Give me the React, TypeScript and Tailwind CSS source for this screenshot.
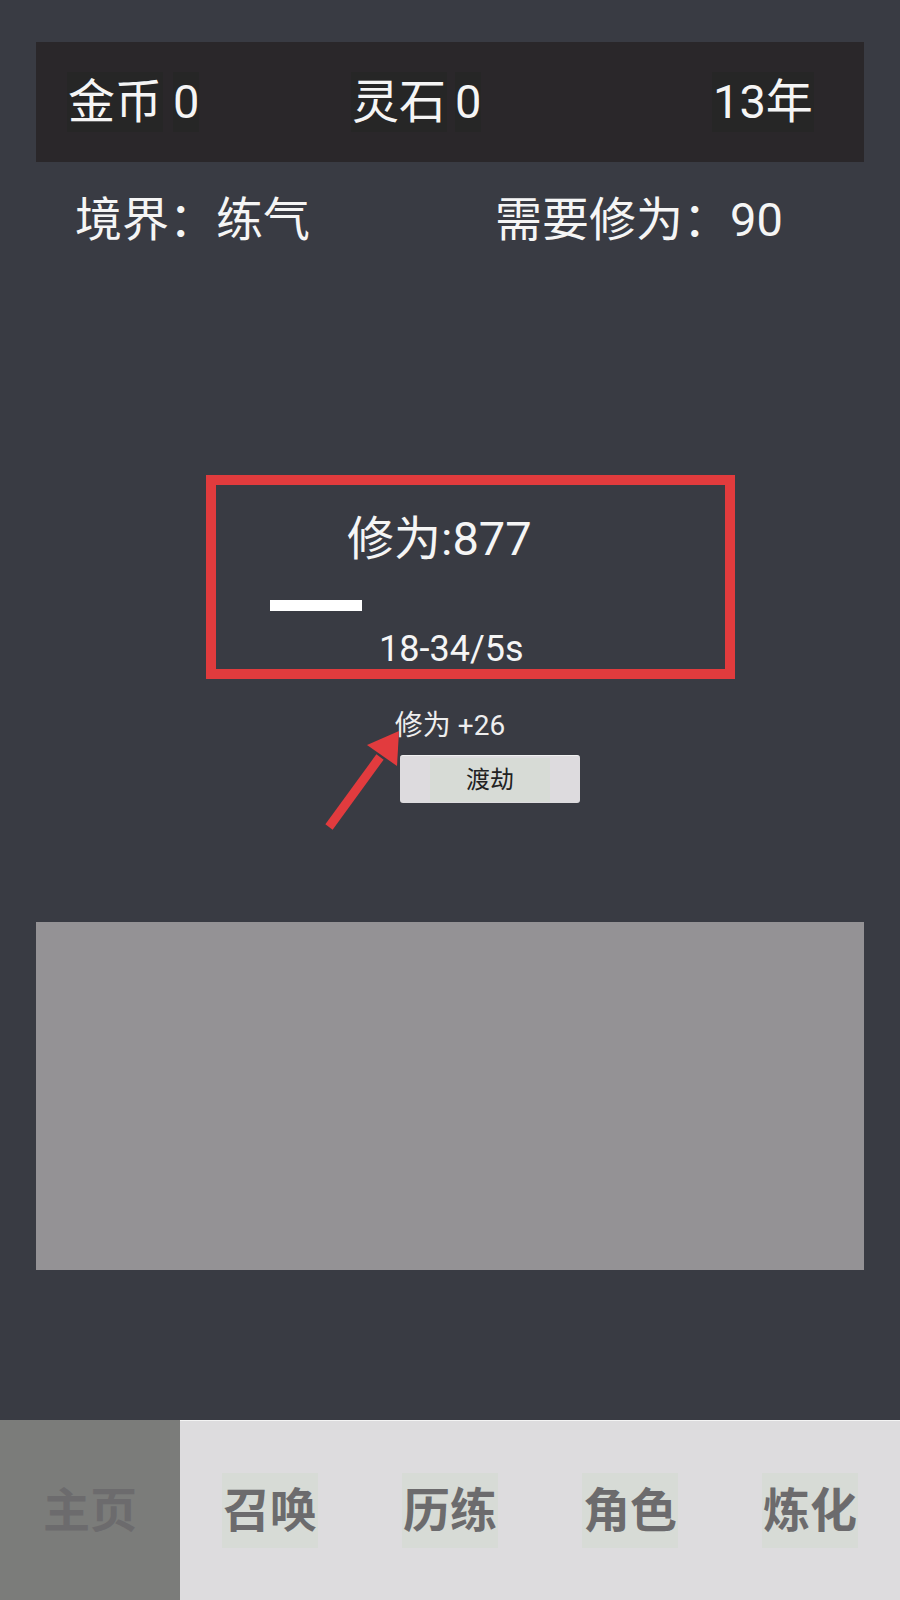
import React from "react";

const F = { fontFamily: "Roboto, 'Noto Sans CJK SC', sans-serif" };

function Tab({ label, active }: { label: string; active?: boolean }) {
  return (
    <div
      className={
        active
          ? "w-[180px] h-[180px] bg-[#7b7c7a] flex items-center justify-center"
          : "w-[180px] h-[180px] bg-[#dddcde] border-t border-[#f4f4f4] flex items-center justify-center"
      }
    >
      <span
        className={
          active
            ? "h-[75px] px-[1px] flex items-center text-[47px] font-bold text-[#6c6b6d] leading-none"
            : "h-[75px] px-[1px] flex items-center text-[47px] font-bold text-[#6c6b6d] leading-none bg-[#d7dbd6]"
        }
      >
        {label}
      </span>
    </div>
  );
}

export default function App() {
  return (
    <div
      className="relative w-[900px] h-[1600px] bg-[#393b43] flex flex-col text-[#f5f5f5] overflow-hidden"
      style={F}
    >
      {/* top bar */}
      <div className="mx-[36px] mt-[42px] h-[120px] bg-[#2a272a] flex items-center pl-[31px]">
        <div className="w-[284px] flex items-center gap-[10px]">
          <span className="h-[60px] leading-[60px] text-[47px] bg-[#262626] px-[1px]">金币</span>
          <span className="h-[60px] leading-[60px] text-[47px] bg-[#262626]">0</span>
        </div>
        <div className="w-[361px] flex items-center gap-[8px]">
          <span className="h-[60px] leading-[60px] text-[47px] bg-[#262626] px-[1px]">灵石</span>
          <span className="h-[60px] leading-[60px] text-[47px] bg-[#262626]">0</span>
        </div>
        <div className="flex items-center">
          <span className="h-[60px] leading-[60px] text-[47px] bg-[#262626] px-[1px]">13年</span>
        </div>
      </div>

      {/* realm row */}
      <div className="mt-[28px] h-[60px] flex items-center pl-[75px] text-[47px] leading-[60px]">
        <div className="w-[420px]">境界：练气</div>
        <div>需要修为：90</div>
      </div>

      {/* cultivation card */}
      <div className="mt-[225px] ml-[206px] w-[529px] h-[204px] border-[10px] border-[#e13b3d] flex flex-col">
        <div className="mt-[26px] pl-[131px] h-[56px] leading-[56px] text-[47px] whitespace-nowrap">
          修为:877
        </div>
        <div className="mt-[33px] ml-[54px] w-[92px] h-[12px] bg-white" />
        <div className="mt-[18px] pl-[163px] h-[40px] leading-[40px] text-[36px] whitespace-nowrap">
          18-34/5s
        </div>
      </div>

      {/* gain text */}
      <div className="mt-[31px] h-[32px] leading-[32px] text-[28px] text-center text-[#eeeeee] whitespace-nowrap">
        修为 +26
      </div>

      {/* button */}
      <div className="mt-[13px] ml-[400px] w-[180px] h-[48px] bg-[#dddbde] border-t border-[#f0f0f0] rounded-[3px] flex items-center justify-center">
        <span className="h-[44px] w-[120px] bg-[#d7dbd6] flex items-center justify-center text-[24px] text-[#222222]">
          渡劫
        </span>
      </div>

      {/* gray panel */}
      <div className="mt-[119px] mx-[36px] h-[348px] bg-[#949295]" />

      {/* tabs */}
      <div className="mt-auto flex">
        <Tab label="主页" active />
        <Tab label="召唤" />
        <Tab label="历练" />
        <Tab label="角色" />
        <Tab label="炼化" />
      </div>

      {/* red annotation arrow */}
      <svg
        className="absolute left-0 top-0 pointer-events-none"
        width="900"
        height="1600"
        viewBox="0 0 900 1600"
      >
        <line x1="329" y1="827" x2="380" y2="757" stroke="#e23b3e" strokeWidth="9" />
        <polygon points="399,731 367,745 397,766" fill="#e23b3e" />
      </svg>
    </div>
  );
}
